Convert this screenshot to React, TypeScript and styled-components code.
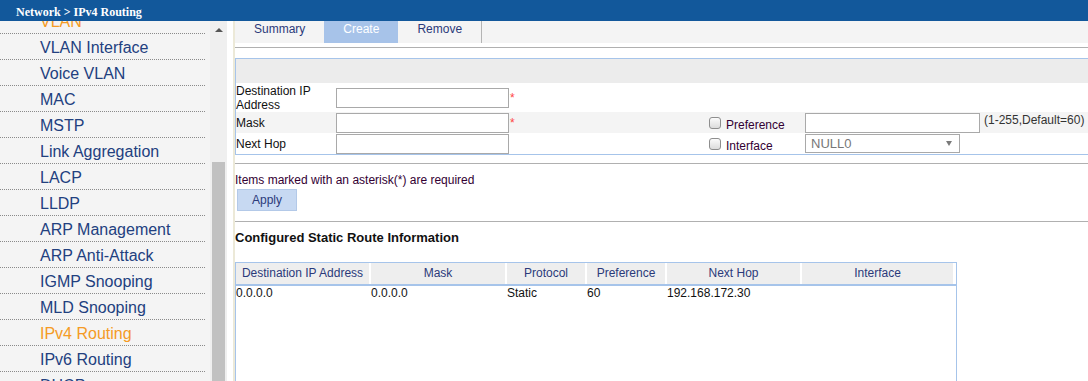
import styled, { createGlobalStyle } from 'styled-components'

const GlobalStyle = createGlobalStyle`
  html, body {
    margin: 0;
    padding: 0;
    background: #fff;
  }
  body {
    font-family: "Liberation Sans", Arial, sans-serif;
    font-size: 12px;
    color: #111;
    overflow: hidden;
  }
  * {
    box-sizing: border-box;
  }
`

const Page = styled.div`
  width: 1088px;
  height: 381px;
  display: flex;
  flex-direction: column;
  overflow: hidden;
`

const TopBar = styled.div`
  height: 21px;
  flex-shrink: 0;
  background: #12589b;
  color: #fff;
  font-family: "Liberation Serif", "Times New Roman", serif;
  font-weight: bold;
  font-size: 12px;
  line-height: 24px;
  padding-left: 16px;
  overflow: hidden;
`

const Body = styled.div`
  flex: 1;
  display: flex;
  min-height: 0;
`

const Sidebar = styled.div`
  width: 227px;
  flex-shrink: 0;
  display: flex;
  overflow: hidden;
`

const MenuPane = styled.div`
  width: 210px;
  background: #f4f4f4;
  overflow: hidden;
`

// the list is scrolled a little: the first entry sits half under the top bar
const MenuList = styled.ul`
  list-style: none;
  margin: -13px 0 0;
  padding: 0;
`

const MenuItem = styled.li<{ $active?: boolean }>`
  width: 205px;
  height: 26px;
  padding: 3px 0 0 40px;
  line-height: 22px;
  border-bottom: 1px dotted #8a8a8a;
  font-size: 16px;
  color: ${p => (p.$active ? '#f59b25' : '#22407f')};
  white-space: nowrap;
`

const ScrollTrack = styled.div`
  width: 17px;
  background: #efefef;
  display: flex;
  flex-direction: column;
`

const ScrollArrow = styled.div`
  height: 17px;
  display: flex;
  align-items: center;
  justify-content: center;

  &::before {
    content: '';
    border-left: 4px solid transparent;
    border-right: 4px solid transparent;
    border-bottom: 4px solid #555;
  }
`

const ScrollThumb = styled.div`
  margin: auto 2px 0;
  height: 219px;
  background: #c1c1c1;
`

const Gutter = styled.div`
  width: 6px;
  flex-shrink: 0;
`

const Content = styled.main`
  flex: 1;
  min-width: 0;
  border-left: 2px solid #ece9d8;
  overflow: hidden;
`

const ContentInner = styled.div`
  width: 900px;
`

const TabBar = styled.nav`
  height: 22px;
  background: #f4f4f4;
  display: flex;
`

const Tab = styled.div<{ $active?: boolean }>`
  padding: 0 19px;
  line-height: 16px;
  height: 22px;
  color: ${p => (p.$active ? '#fff' : '#2b3a7a')};
  background: ${p => (p.$active ? '#a7c3e9' : 'transparent')};

  &:last-child {
    border-right: 1px solid #b4b4b4;
  }
`

const Rule = styled.hr<{ $gap: number }>`
  margin: ${p => p.$gap}px 0 0;
  border: none;
  border-top: 1px solid #b0b0b0;
  height: 0;
`

const FormPanel = styled.section`
  margin-top: 10px;
  border: 1px solid #a6c4ea;
`

const FormHead = styled.div`
  height: 24px;
  background: #ececec;
`

const FormRow = styled.div<{ $shade?: boolean; $tall?: boolean }>`
  display: grid;
  grid-template-columns: 100px 373px 96px 1fr;
  align-items: center;
  height: ${p => (p.$tall ? 29 : 21)}px;
  background: ${p => (p.$shade ? '#f4f4f4' : '#fff')};
`

const FieldLabel = styled.label`
  line-height: 14px;
  color: #111;
`

const FieldCell = styled.div`
  display: flex;
  align-items: flex-start;
`

const TextBox = styled.input<{ $w: number }>`
  width: ${p => p.$w}px;
  height: 20px;
  margin: 0;
  padding: 1px 3px;
  border: 1px solid #a9a9a9;
  background: #fff;
  font: inherit;
  outline: none;
`

const Star = styled.span`
  color: #ff4545;
  font-size: 12px;
  line-height: 12px;
  margin: 4px 0 0 1px;
`

const CheckCell = styled.div`
  display: flex;
  align-items: flex-start;
  align-self: stretch;
`

const Check = styled.input`
  appearance: none;
  width: 12px;
  height: 12px;
  margin: 5px 5px 0 0;
  border: 1px solid #8e8e8e;
  border-radius: 3px;
  background: linear-gradient(#fbfbfb, #dcdcdc);
`

const OptLabel = styled.label`
  margin-top: 6px;
  line-height: 14px;
  color: #330033;
`

const Hint = styled.span`
  margin-left: 4px;
  color: #333;
  white-space: nowrap;
`

const SelectWrap = styled.div`
  position: relative;
  width: 155px;
  height: 19px;
`

const Select = styled.select`
  appearance: none;
  width: 100%;
  height: 100%;
  margin: 0;
  padding: 0 0 0 5px;
  border: 1px solid #a9a9a9;
  background: #fff;
  color: #777;
  font: inherit;
  font-size: 13px;
  outline: none;
`

const SelectArrow = styled.span`
  position: absolute;
  right: 8px;
  top: 7px;
  border-left: 3px solid transparent;
  border-right: 3px solid transparent;
  border-top: 5px solid #7a7a7a;
  pointer-events: none;
`

const Note = styled.p`
  margin: 9px 0 0;
  line-height: 14px;
  color: #330033;
`

const ApplyButton = styled.button`
  display: block;
  width: 60px;
  height: 22px;
  margin: 2px 0 0 2px;
  padding: 0;
  border: 1px solid #b3c9e8;
  background: #c7d9f2;
  color: #2b3a7a;
  font: inherit;
`

const SectionTitle = styled.h3`
  margin: 8px 0 0;
  font-size: 13px;
  line-height: 16px;
  font-weight: bold;
  color: #111;
`

const TableBox = styled.div`
  margin-top: 16px;
  width: 722px;
  height: 140px;
  border: 1px solid #a6c4ea;
`

const ColGrid = styled.div`
  display: grid;
  grid-template-columns: 133px 134px 78px 78px 133px 151px;
  column-gap: 2px;
`

const HeadRow = styled(ColGrid)`
  height: 23px;
  border-bottom: 2px solid #a6c4ea;
`

const HeadCell = styled.div`
  background: #eeeeee;
  color: #2b3a7a;
  text-align: center;
  line-height: 21px;
  white-space: nowrap;
`

const DataCell = styled.div`
  line-height: 14px;
  color: #111;
  white-space: nowrap;
`

const menu = [
  'VLAN',
  'VLAN Interface',
  'Voice VLAN',
  'MAC',
  'MSTP',
  'Link Aggregation',
  'LACP',
  'LLDP',
  'ARP Management',
  'ARP Anti-Attack',
  'IGMP Snooping',
  'MLD Snooping',
  'IPv4 Routing',
  'IPv6 Routing',
  'DHCP',
]

const highlighted = ['VLAN', 'IPv4 Routing']

const columns = ['Destination IP Address', 'Mask', 'Protocol', 'Preference', 'Next Hop', 'Interface']

const routes = [['0.0.0.0', '0.0.0.0', 'Static', '60', '192.168.172.30', '']]

export default function App() {
  return (
    <Page>
      <GlobalStyle />
      <TopBar>Network &gt; IPv4 Routing</TopBar>
      <Body>
        <Sidebar>
          <MenuPane>
            <MenuList>
              {menu.map(item => (
                <MenuItem key={item} $active={highlighted.includes(item)}>
                  {item}
                </MenuItem>
              ))}
            </MenuList>
          </MenuPane>
          <ScrollTrack>
            <ScrollArrow />
            <ScrollThumb />
          </ScrollTrack>
        </Sidebar>
        <Gutter />
        <Content>
          <ContentInner>
            <TabBar>
              <Tab>Summary</Tab>
              <Tab $active>Create</Tab>
              <Tab>Remove</Tab>
            </TabBar>
            <Rule $gap={4} />

            <FormPanel>
              <FormHead />
              <FormRow $tall>
                <FieldLabel>
                  Destination IP
                  <br />
                  Address
                </FieldLabel>
                <FieldCell>
                  <TextBox $w={173} />
                  <Star>*</Star>
                </FieldCell>
              </FormRow>
              <FormRow $shade>
                <FieldLabel>Mask</FieldLabel>
                <FieldCell>
                  <TextBox $w={173} />
                  <Star>*</Star>
                </FieldCell>
                <CheckCell>
                  <Check type="checkbox" />
                  <OptLabel>Preference</OptLabel>
                </CheckCell>
                <FieldCell>
                  <TextBox $w={175} />
                  <Hint>(1-255,Default=60)</Hint>
                </FieldCell>
              </FormRow>
              <FormRow>
                <FieldLabel>Next Hop</FieldLabel>
                <FieldCell>
                  <TextBox $w={173} />
                </FieldCell>
                <CheckCell>
                  <Check type="checkbox" />
                  <OptLabel>Interface</OptLabel>
                </CheckCell>
                <FieldCell>
                  <SelectWrap>
                    <Select defaultValue="NULL0">
                      <option>NULL0</option>
                    </Select>
                    <SelectArrow />
                  </SelectWrap>
                </FieldCell>
              </FormRow>
            </FormPanel>

            <Rule $gap={8} />
            <Note>Items marked with an asterisk(*) are required</Note>
            <ApplyButton>Apply</ApplyButton>
            <Rule $gap={10} />

            <SectionTitle>Configured Static Route Information</SectionTitle>
            <TableBox>
              <HeadRow>
                {columns.map(c => (
                  <HeadCell key={c}>{c}</HeadCell>
                ))}
              </HeadRow>
              {routes.map((r, i) => (
                <ColGrid key={i}>
                  {r.map((v, j) => (
                    <DataCell key={j}>{v}</DataCell>
                  ))}
                </ColGrid>
              ))}
            </TableBox>
          </ContentInner>
        </Content>
      </Body>
    </Page>
  )
}
